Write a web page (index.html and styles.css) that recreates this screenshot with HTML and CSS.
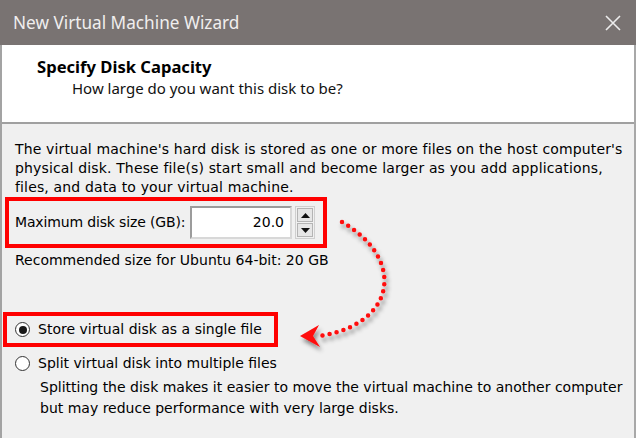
FILE: index.html
```html
<!DOCTYPE html>
<html>
<head>
<meta charset="utf-8">
<link rel="stylesheet" href="styles.css">
</head>
<body>
<div class="window">
  <div class="titlebar">
    <span class="title">New Virtual Machine Wizard</span>
    <svg class="close" width="18" height="18" viewBox="0 0 18 18"><path d="M2 2 L16 16 M16 2 L2 16" stroke="#ececec" stroke-width="1.6" fill="none"/></svg>
  </div>
  <div class="frame">
    <div class="header">
      <div class="heading">Specify Disk Capacity</div>
      <div class="subheading">How large do you want this disk to be?</div>
    </div>
    <div class="content">
      <p class="intro">The virtual machine's hard disk is stored as one or more files on the host computer's physical disk. These file(s) start small and become larger as you add applications, files, and data to your virtual machine.</p>
      <div class="size-row mark">
        <span class="label">Maximum disk size (GB):</span>
        <div class="spin-group">
          <div class="num-input">20.0</div>
          <div class="spinner">
            <div class="spin-btn"><svg width="9" height="5" viewBox="0 0 9 5"><path d="M4.5 0 L9 5 L0 5 Z" fill="#111"/></svg></div>
            <div class="spin-btn"><svg width="9" height="5" viewBox="0 0 9 5"><path d="M0 0 L9 0 L4.5 5 Z" fill="#111"/></svg></div>
          </div>
        </div>
      </div>
      <p class="recommend">Recommended size for Ubuntu 64-bit: 20 GB</p>
      <div class="radio mark-radio">
        <span class="radio-dot checked"></span>
        <span>Store virtual disk as a single file</span>
      </div>
      <div class="radio radio-plain">
        <span class="radio-dot"></span>
        <span>Split virtual disk into multiple files</span>
      </div>
      <p class="desc">Splitting the disk makes it easier to move the virtual machine to another computer but may reduce performance with very large disks.</p>
    </div>
  </div>
  <svg class="arrow" width="636" height="438" viewBox="0 0 636 438">
    <defs>
      <filter id="sh" x="-20%" y="-20%" width="160%" height="160%">
        <feDropShadow dx="2" dy="4" stdDeviation="2" flood-color="#000" flood-opacity="0.45"/>
      </filter>
    </defs>
    <g filter="url(#sh)">
      <path d="M342 222 C370 238 390 264 383 292 C376 318 346 333 318 336" fill="none" stroke="#ff0a0a" stroke-width="4.5" stroke-linecap="round" stroke-dasharray="0 7.2"/>
      <path d="M300 336 L319 325 L313 336 L320 347 Z" fill="#ff0a0a"/>
    </g>
  </svg>
</div>
</body>
</html>
```
FILE: styles.css
```css
body {
  margin: 0;
  background: #f0f0f0;
}

.window {
  position: relative;
  width: 636px;
  height: 438px;
  overflow: hidden;
  display: flex;
  flex-direction: column;
  font-family: "DejaVu Sans", Verdana, sans-serif;
  color: #000;
}

.titlebar {
  height: 45px;
  flex: none;
  background: #797372;
  display: flex;
  align-items: center;
  justify-content: space-between;
  padding: 0 14px 0 13px;
  box-sizing: border-box;
}

.title {
  font-family: "Noto Sans", sans-serif;
  font-size: 17.2px;
  color: #f0eeee;
}

.close {
  display: block;
}

.frame {
  flex: 1;
  display: flex;
  flex-direction: column;
  border-left: 2px solid #a3a3a3;
  border-right: 2px solid #a8a8a8;
  background: #f0f0f0;
}

.header {
  height: 79px;
  flex: none;
  box-sizing: border-box;
  background: #fff;
  border-bottom: 2px solid #a0a0a0;
  padding: 11px 0 0 35px;
}

.heading {
  font-family: "Noto Sans", sans-serif;
  font-weight: bold;
  font-size: 16.6px;
  line-height: 21px;
}

.subheading {
  font-family: "Noto Sans", sans-serif;
  font-size: 15px;
  line-height: 20px;
  margin: 1px 0 0 35px;
  color: #111;
}

.content {
  padding: 16px 0 0 13px;
  font-size: 14px;
  line-height: 19px;
}

.intro {
  margin: 0;
  width: 615px;
  letter-spacing: 0.15px;
}

.mark {
  border: 4px solid #ff0000;
}

.size-row {
  margin: 0 0 0 -10px;
  width: 322px;
  height: 51px;
  box-sizing: border-box;
  padding: 0 8px 0 6px;
  display: flex;
  align-items: center;
  justify-content: space-between;
}

.label {
  letter-spacing: -0.15px;
}

.spin-group {
  display: flex;
  gap: 3px;
  height: 33px;
}

.num-input {
  width: 102px;
  box-sizing: border-box;
  border: 2px solid;
  border-color: #9c9c9c #d8d8d8 #d8d8d8 #9c9c9c;
  background: #fff;
  text-align: right;
  padding-right: 6px;
  line-height: 29px;
}

.spinner {
  width: 20px;
  box-sizing: border-box;
  border: 1px solid #cfcfcf;
  display: flex;
  flex-direction: column;
  gap: 1px;
  padding: 1px;
}

.spin-btn {
  flex: 1;
  background: #e6e6e6;
  border: 1px solid #b4b4b4;
  display: flex;
  align-items: center;
  justify-content: center;
}

.spin-btn svg {
  display: block;
}

.recommend {
  margin: 2.5px 0 0 0;
}

.radio {
  display: flex;
  align-items: center;
  gap: 8px;
}

.mark-radio {
  margin: 42.5px 0 0 -12px;
  border: 4px solid #ff0000;
  width: 275px;
  box-sizing: border-box;
  padding: 4px 0 4px 8px;
}

.radio-plain {
  margin-top: 6.5px;
}

.radio-dot {
  width: 15px;
  height: 15px;
  flex: none;
  box-sizing: border-box;
  border-radius: 50%;
  border: 1.5px solid #333;
  background: #fff;
  display: flex;
  align-items: center;
  justify-content: center;
}

.radio-dot.checked::after {
  content: "";
  width: 8px;
  height: 8px;
  border-radius: 50%;
  background: #1a1a1a;
}

.desc {
  margin: 4px 0 0 25px;
  line-height: 21px;
  width: 590px;
}

.arrow {
  position: absolute;
  left: 0;
  top: 0;
  pointer-events: none;
}
```
